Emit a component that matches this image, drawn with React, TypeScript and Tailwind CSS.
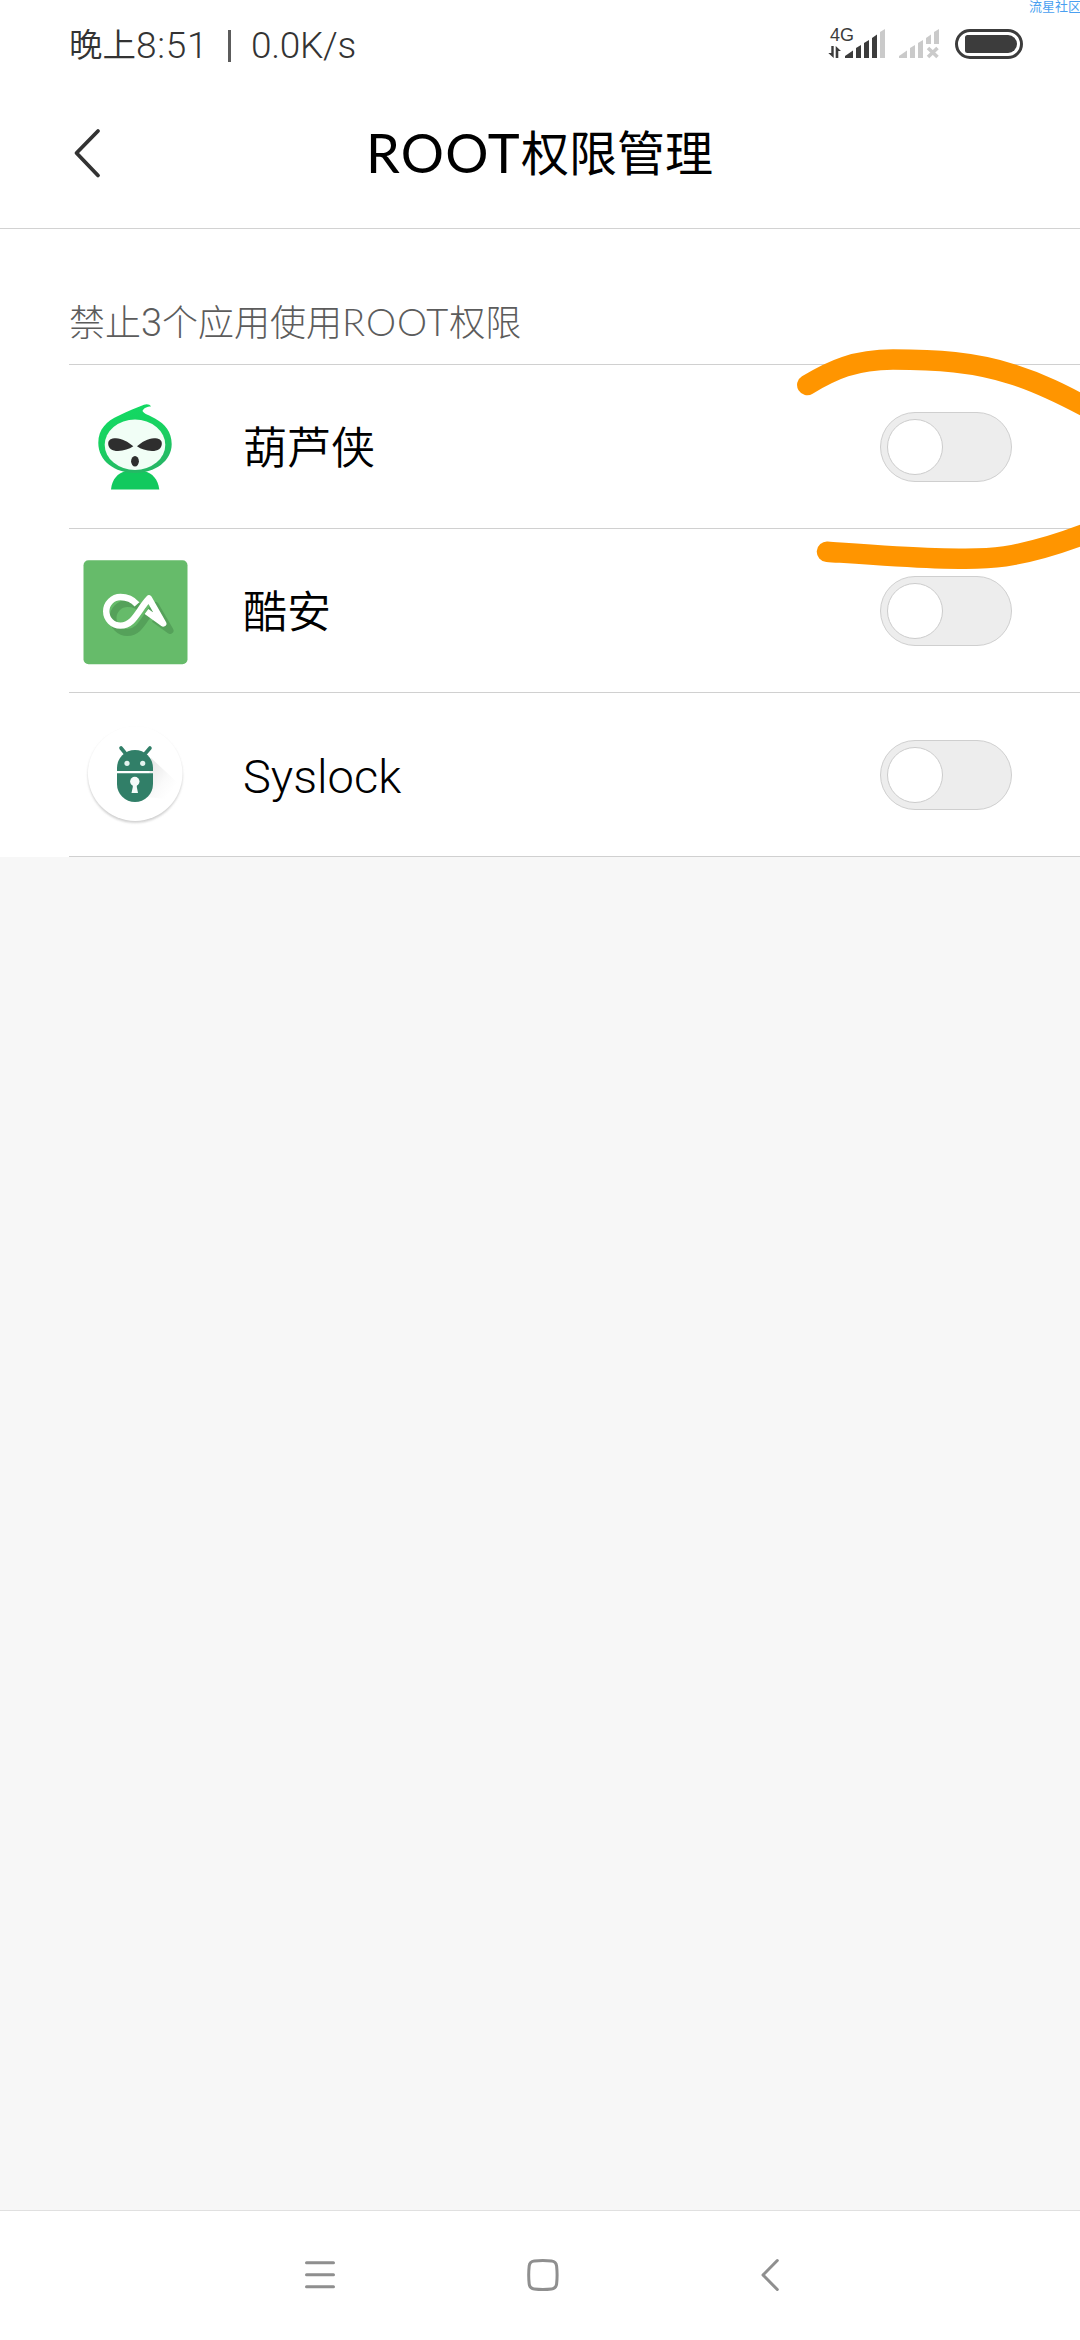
const GourdIcon = () => (
  <svg viewBox="0 0 120 120" className="h-[120px] w-[120px]">
    <defs>
      <linearGradient id="gourd" x1="0" y1="0" x2="0.3" y2="1">
        <stop offset="0" stopColor="#10dc64" />
        <stop offset="0.6" stopColor="#18d060" />
        <stop offset="1" stopColor="#25b865" />
      </linearGradient>
    </defs>
    <path
      d="M36 102.500C37 92 43 86 50 84.500H70C77 86 83 92 84.300 102.500Z"
      fill="#12c95e"
    />
    <path
      d="M23.300 56C23.300 42 32 34 43 29C53 24 62 20.500 69 17.700C72 16.500 75 17.500 76 19.400C72 19.500 68.500 21 67.500 24C69 27 75 28.500 80 31.500C90 37 96.700 45 96.700 57C96.700 74 80 86 60 86C40 86 23.300 74 23.300 56Z"
      fill="url(#gourd)"
    />
    <ellipse cx="60" cy="57.800" rx="30.300" ry="25.200" fill="#f1fef6" />
    <path
      d="M58.300 59.300C53 55 47 51.300 41 51.300C36 51.300 33 53 33.200 57C33.500 61.500 37 64 43 64C49 64 54 62 58.300 59.300Z"
      fill="#2e2e2e"
    />
    <path
      d="M62 59.300C67 55 73 51.300 79 51.300C84 51.300 87 53 86.800 57C86.500 61.500 83 64 77 64C71 64 66 62 62 59.300Z"
      fill="#2e2e2e"
    />
    <ellipse cx="60" cy="74.300" rx="3.900" ry="5.300" fill="#2e2e2e" />
  </svg>
);

const CoolapkIcon = () => (
  <svg viewBox="0 0 120 120" className="h-[120px] w-[120px]">
    <rect x="8.500" y="9.200" width="104" height="104" rx="5" fill="#66bb6a" />
    <g
      fill="none"
      stroke="#55a15a"
      strokeWidth="7"
      strokeLinejoin="round"
      transform="translate(6.500 7)"
    >
      <path d="M61.500 52.500C57 47 51 45.500 46 45.500A14.500 14.500 0 0 0 46 74.500C59 74.500 62 60 74 47.500L88.500 72.500L72.500 61" />
    </g>
    <g fill="none" stroke="#fff" strokeWidth="6.400" strokeLinejoin="round">
      <path d="M62 53.300C57 47.800 51 46 45.500 46A14.300 14.300 0 0 0 45.500 74.600C59 74.600 63 59 74 47.500L88.200 72.500L71.500 60.500" />
    </g>
    <path d="M78 61L82 62L89 73L74 63Z" fill="#fff" />
  </svg>
);

const SyslockIcon = () => (
  <svg viewBox="0 0 120 120" className="h-[120px] w-[120px]">
    <defs>
      <linearGradient id="longShadow" x1="0" y1="0" x2="1" y2="1">
        <stop offset="0" stopColor="#e2e2e2" />
        <stop offset="0.55" stopColor="#fafafa" />
        <stop offset="0.8" stopColor="#fff" />
      </linearGradient>
      <filter id="soft" x="-20%" y="-20%" width="140%" height="140%">
        <feGaussianBlur stdDeviation="1.200" />
      </filter>
      <clipPath id="disc">
        <circle cx="60.200" cy="58.800" r="47" />
      </clipPath>
    </defs>
    <circle cx="60.200" cy="60.500" r="47.300" fill="#cfcfcf" filter="url(#soft)" />
    <circle cx="60.200" cy="58.600" r="47.300" fill="#fff" />
    <path
      d="M76 43L103 68L90 84L72 82Z"
      fill="url(#longShadow)"
      clipPath="url(#disc)"
    />
    <path
      d="M46 33L50.500 38.500M75 33L70.300 38.500"
      stroke="#317f68"
      strokeWidth="3.600"
      strokeLinecap="round"
    />
    <path d="M42 56V53A18 18 0 0 1 78 53V56Z" fill="#317f68" />
    <path d="M42 58.300H78V69A18 18 0 0 1 42 69Z" fill="#317f68" />
    <circle cx="52" cy="48.300" r="2.600" fill="#e4f3ef" />
    <circle cx="67.700" cy="48.300" r="2.600" fill="#e4f3ef" />
    <circle cx="59.800" cy="66.500" r="4.700" fill="#f4fbf9" />
    <path d="M57.800 68H61.800V72L63 78H56.500L57.800 72Z" fill="#f4fbf9" />
  </svg>
);

const apps = [
  { id: 1, name: "葫芦侠", icon: <GourdIcon />, size: "text-[44px]" },
  { id: 2, name: "酷安", icon: <CoolapkIcon />, size: "text-[44px]" },
  { id: 3, name: "Syslock", icon: <SyslockIcon />, size: "text-[47px]" },
];

const StatusIcons = () => (
  <svg viewBox="820 20 210 50" className="h-[50px] w-[210px]">
    <text
      x="830"
      y="41"
      fontSize="18"
      fill="#3c3c3c"
      className="font-['Liberation_Sans',sans-serif]"
    >
      4G
    </text>
    <g fill="#3c3c3c">
      <path d="M831.300 46H833.700V58L828.300 53H831.300ZM835.700 58V46L841 51H838.300V58Z" />
      <path d="M845 58V56L853 50.500V58Z" />
      <path d="M856 48L861 45V58H856Z" />
      <path d="M864 43L869 40V58H864Z" />
      <path d="M872 38L877 34.500V58H872Z" />
    </g>
    <g fill="#cacaca">
      <path d="M880 32L885 29V58H880Z" />
      <path d="M899 58V56L907 50.500V58Z" />
      <path d="M910 48L915 45V58H910Z" />
      <path d="M918 43L923 40V58H918Z" />
      <path d="M926 38L931 34.500V44H926Z" />
      <path d="M934 32L939 29V44H934Z" />
    </g>
    <path d="M928 48L937.500 57M937.500 48L928 57" stroke="#cacaca" strokeWidth="3.600" />
    <rect
      x="956.500"
      y="30.500"
      width="65"
      height="27"
      rx="13.500"
      fill="none"
      stroke="#3c3c3c"
      strokeWidth="3"
    />
    <path
      d="M967.500 35H1008A9 9 0 0 1 1008 53H967.500Q965 53 965 50.500V37.500Q965 35 967.500 35Z"
      fill="#3c3c3c"
    />
  </svg>
);

const Toggle = () => (
  <div className="flex h-[70px] w-[132px] items-center rounded-full border border-[#cfcfcf] bg-[#ededed] pl-1.5">
    <div className="h-14 w-14 rounded-full border border-[#cccccc] bg-white" />
  </div>
);

const NavBar = () => (
  <nav className="h-[130px] border-t border-[#e0e0e0] bg-white">
    <svg
      viewBox="0 2211 1080 129"
      className="h-[129px] w-full"
      fill="none"
      stroke="#8f8f8f"
      strokeWidth="3"
      strokeLinecap="round"
      strokeLinejoin="round"
    >
      <path d="M306.500 2262.700H333.500M306.500 2274.700H333.500M306.500 2286.700H333.500" />
      <path d="M534.200 2261Q542.800 2260 551.600 2261Q556 2261.500 556.600 2266Q557.600 2275 556.600 2284Q556 2288.500 551.600 2289Q542.800 2290 534.200 2289Q529.700 2288.500 529.200 2284Q528.200 2275 529.200 2266Q529.700 2261.500 534.200 2261Z" />
      <path d="M777.300 2260.500L763 2275L777.300 2289.500" />
    </svg>
  </nav>
);

const App = () => {
  return (
    <div className="relative flex h-[2340px] w-[1080px] flex-col overflow-hidden bg-[#f7f7f7] font-[Roboto,'Noto_Sans_CJK_SC',sans-serif] text-black">
      <div className="flex h-[90px] items-start justify-between bg-white pl-[69px] pr-[50px] text-[#333]">
        <div className="flex h-[90px] items-center pt-0.5 text-[37px] font-[350] leading-[88px]">
          <span className="text-[33.500px]">晚上</span>
          <span className="w-[72px] tracking-[0.7px]">8:51</span>
          <span className="ml-5 mr-5 h-8 w-[3px] bg-[#5c5c5c]" />
          <span className="tracking-[-0.3px]">0.0K/s</span>
        </div>
        <div className="pt-5">
          <StatusIcons />
        </div>
      </div>

      <header className="flex h-[139px] items-center border-b border-[#d2d2d2] bg-white px-[69px] pb-[13px]">
        <svg viewBox="0 0 40 60" className="h-[60px] w-10">
          <path
            d="M29 8L7.500 30L29 52.500"
            fill="none"
            stroke="#333"
            strokeWidth="3.800"
            strokeLinecap="round"
            strokeLinejoin="round"
          />
        </svg>
        <h1 className="flex flex-1 items-center justify-center pr-[41px] font-[Lato,'Noto_Sans_CJK_SC',sans-serif]">
          <span className="text-[54px] tracking-[1.200px]">ROOT</span>
          <span className="text-[48px]">权限管理</span>
        </h1>
      </header>

      <main className="flex-1">
        <section className="bg-white pt-[58px]">
          <h2 className="ml-[69px] flex h-[78px] items-center border-b border-[#d0d0d0] pb-2 font-[Lato,'Noto_Sans_CJK_SC',sans-serif] text-4xl font-light text-[#5c5c5c]">
            <span>禁止</span>
            <span className="pt-1 font-[Roboto] text-[38px]">3</span>
            <span>个应用使用</span>
            <span className="text-[38px] tracking-[0.900px]">ROOT</span>
            <span>权限</span>
          </h2>
          <ul>
            {apps.map((app) => (
              <li
                key={app.id}
                className="ml-[69px] flex h-[164px] items-center border-b border-[#d0d0d0] pl-1.5 pr-[68px] pt-px"
              >
                {app.icon}
                <span className={`ml-12 flex-1 pt-1 font-[350] ${app.size}`}>
                  {app.name}
                </span>
                <Toggle />
              </li>
            ))}
          </ul>
        </section>
      </main>

      <NavBar />

      <svg
        viewBox="0 0 1080 700"
        className="pointer-events-none absolute left-0 top-0 h-[700px] w-[1080px]"
        fill="none"
        stroke="#ff9500"
        strokeWidth="20.500"
        strokeLinecap="round"
      >
        <path d="M807.300 385C832 370 855 359.500 893 359.500C935 359.500 975 362 1013 374.500C1040 383 1062 394 1090 409" />
        <path d="M827 551.700C860 554 900 557 935 558.300C965 559 990 559.500 1013 555C1040 550 1062 543 1090 532" />
      </svg>
      <span className="absolute right-0 top-0 w-[51px] overflow-hidden whitespace-nowrap text-[13px] leading-[13px] text-[#4a9ff0]">
        流星社区
      </span>
    </div>
  );
};

export default App;
